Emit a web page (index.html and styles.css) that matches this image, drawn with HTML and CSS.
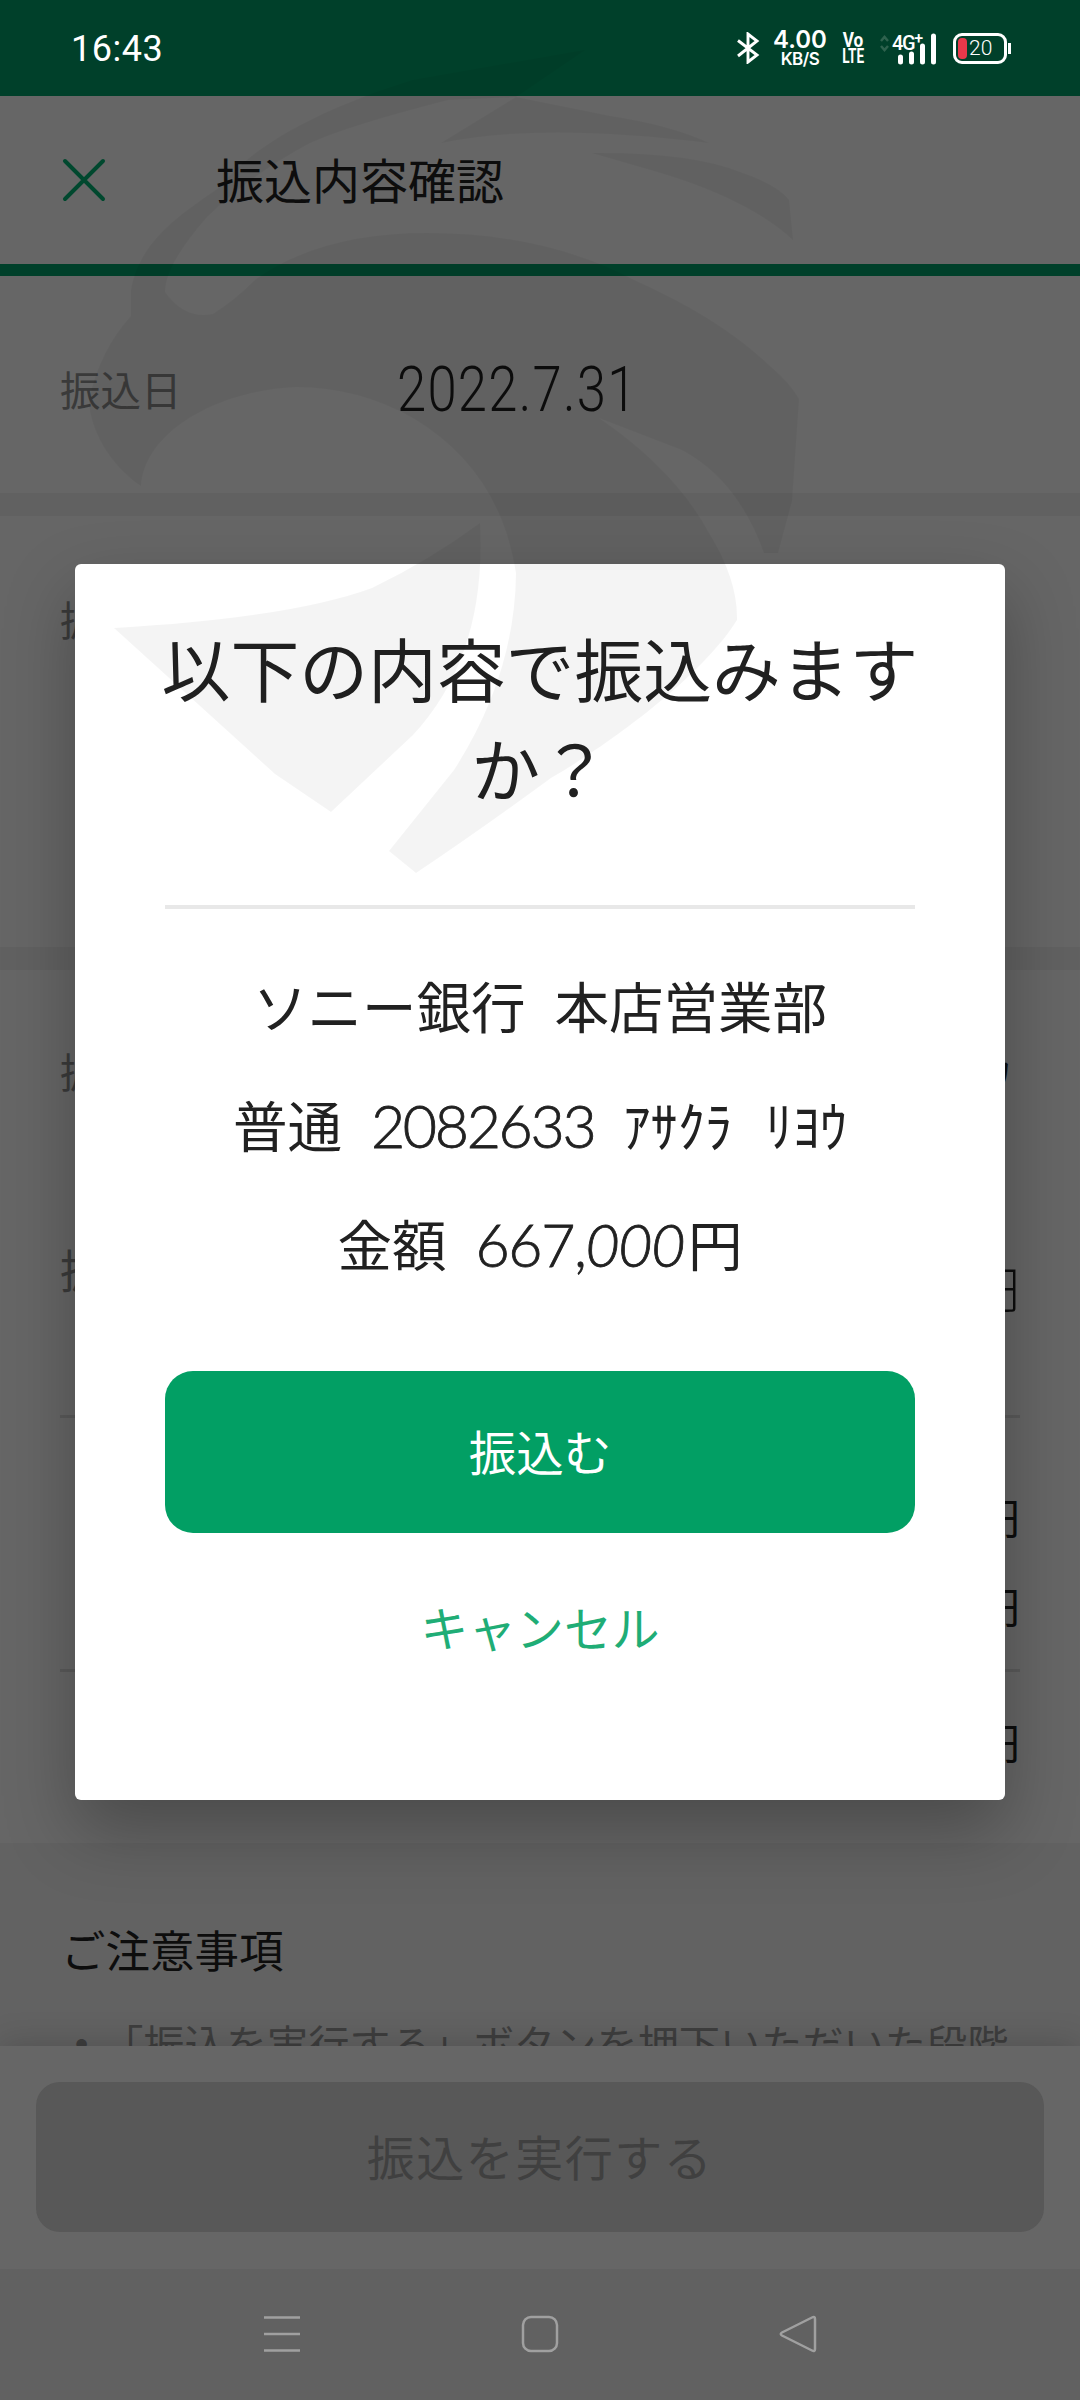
FILE: index.html
```html
<!DOCTYPE html>
<html lang="ja">
<head>
<meta charset="utf-8">
<title>振込内容確認</title>
<link rel="stylesheet" href="styles.css">
</head>
<body>
<div class="screen">
  <header class="status">
    <span class="clock">16:43</span>
    <svg class="bluetooth" width="24" height="32" viewBox="0 0 24 32"><path d="M2 8.500L21 23L12 30V2L21 9L2 24" fill="none" stroke="#fff" stroke-width="2.900"/></svg>
    <div class="speed"><span>4.00</span><small>KB/S</small></div>
    <div class="volte"><span>Vo</span><span>LTE</span></div>
    <div class="signal">
      <svg width="58" height="36" viewBox="0 0 58 36"><path d="M1 11l3.500-4l3.500 4M1 16l3.500 4l3.500-4" fill="none" stroke="#2e624e" stroke-width="2.500"/><path d="M20.500 27v5M31.500 24v8M42.500 16v16M53.500 6v26" stroke="#fff" stroke-width="5" stroke-linecap="round"/></svg>
      <span class="net">4G<sup>+</sup></span>
    </div>
    <div class="battery"><i></i><span>20</span></div>
  </header>
  <div class="appbar">
    <svg width="46" height="46" viewBox="0 0 46 46"><path d="M4 4L42 42M42 4L4 42" stroke="#00482e" stroke-width="4" stroke-linecap="round"/></svg>
    <h1>振込内容確認</h1>
  </div>
  <main class="content">
    <section class="date-row"><span class="label">振込日</span><span class="date">2022.7.31</span></section>
    <section class="source"><span class="label">振込元</span></section>
    <section class="detail">
      <div class="row payee"><span class="label">振込先</span><span class="name">ｱｻｸﾗ ﾘﾖｳ</span></div>
      <div class="row amount"><span class="label big">振込金額</span><span class="yen big-yen">円</span></div>
      <div class="fees"><span class="yen">円</span><span class="yen">円</span></div>
      <div class="total"><span class="yen">円</span></div>
    </section>
    <section class="notes">
      <h2>ご注意事項</h2>
      <p><b>・</b>「振込を実行する」ボタンを押下いただいた段階</p>
    </section>
  </main>
  <footer class="action"><button>振込を実行する</button></footer>
  <nav class="nav">
    <svg width="40" height="40" viewBox="0 0 40 40"><path d="M2 3.500H38M2 20H38M2 36.500H38"/></svg>
    <svg width="40" height="40" viewBox="0 0 40 40"><rect x="3" y="3" width="34" height="34" rx="8"/></svg>
    <svg width="40" height="40" viewBox="0 0 40 40"><path d="M34 3.500Q37 2 37 5V35Q37 38 34 36.500L4 21.500Q1.500 20 4 18.500Z"/></svg>
  </nav>

  <div class="dialog">
    <h2>以下の内容で振込みますか？</h2>
    <div class="info">
      <p>ソニー銀行<s></s>本店営業部</p>
      <p>普通<s></s><span class="num">2082633</span><s></s>ｱｻｸﾗ<s class="wide"></s>ﾘﾖｳ</p>
      <p>金額<s></s><span class="num sum">667,<em>000</em></span>円</p>
    </div>
    <button class="primary">振込む</button>
    <button class="cancel">キャンセル</button>
  </div>

  <svg class="mark" width="1080" height="900" viewBox="0 0 1080 900">
    <path d="M131 290C140 240 180 215 220 187C245 155 300 115 413 80L585 50L516 97L441 143Q540 122 709 143Q670 125 610 116L516 97L448 100Q350 125 310 143Q250 175 207 217Q165 265 165 292Q185 320 213 314Q235 300 255 280Q320 233 427 233Q545 233 634 280Q720 318 771 367Q790 383 799 399L792 501L778 553H764Q738 480 682 450L599 418Q675 470 709 533Q738 580 737 620C700 680 600 750 551 778Q480 830 416 873L389 851L454 770Q515 675 516 573Q500 470 413 418Q358 387 296 387C220 390 145 430 141 486C110 465 90 430 89 400Q100 350 131 316Z"/>
    <path d="M592 153Q690 152 740 172Q778 185 789 200L793 240Q750 200 661 173Z"/>
    <path d="M480 523Q487 655 413 735L331 812L275 774L114 628Q290 618 372 588Q430 560 480 523Z"/>
  </svg>
</div>
</body>
</html>
```
FILE: styles.css
```css
* { box-sizing: border-box; }
body { margin: 0; }
h1, h2, p { margin: 0; font-weight: 400; }
s, i { display: block; text-decoration: none; }
button { border: 0; padding: 0; font: inherit; background: none; }

.screen {
  position: relative;
  display: flex;
  flex-direction: column;
  width: 1080px;
  height: 2400px;
  overflow: hidden;
  background: #666;
  color: #0d0d0d;
  font-family: "Noto Sans CJK JP", sans-serif;
  text-spacing-trim: space-all;
}

/* status bar */
.status {
  display: flex;
  align-items: center;
  height: 96px;
  padding: 0 68px 0 71px;
  background: #00402a;
  color: #fff;
  font-family: Inter, sans-serif;
}
.clock { font: 36px/1 Roboto, sans-serif; letter-spacing: .5px; margin: 2px auto 0 0; }
.bluetooth { margin-right: 13px; }
.speed, .volte { display: flex; flex-direction: column; align-items: center; font-weight: 600; }
.speed { width: 54px; margin-right: 14px; }
.speed span { font-size: 24px; line-height: 22px; }
.speed small { font-size: 17px; line-height: 17px; letter-spacing: -.5px; }
.volte { width: 24px; margin-right: 15px; font: 700 20px/16px Roboto, sans-serif; }
.volte span { transform: scaleX(.68); }
.volte span:first-child { transform: scaleX(.86); }
.signal { position: relative; width: 58px; height: 36px; margin-right: 15px; }
.net { position: absolute; left: 12px; top: 3px; font: 500 20px/20px Roboto, sans-serif; letter-spacing: -1.4px; }
.net sup { font-size: 16px; line-height: 0; vertical-align: 6px; }
.battery {
  position: relative;
  display: flex;
  align-items: center;
  gap: 2px;
  width: 54px;
  height: 31px;
  margin-right: 5px;
  padding-left: 2px;
  border: 3px solid #fff;
  border-radius: 9px;
  font: 300 21px/1 Roboto, sans-serif;
}
.battery i { width: 9px; height: 21px; border-radius: 4px; background: #e8384a; }
.battery::after { content: ""; position: absolute; right: -7px; top: 7px; width: 3px; height: 11px; background: #fff; }

/* app bar */
.appbar {
  display: flex;
  align-items: center;
  gap: 109px;
  height: 180px;
  padding-left: 61px;
  border-bottom: 12px solid #00402a;
}
.appbar h1 { margin-top: -4px; font-size: 48px; line-height: 72px; }

/* page content */
.content { height: 1770px; overflow: hidden; }
.label { color: #3a3a3a; font-size: 40.500px; line-height: 60px; }
.date-row {
  display: flex;
  align-items: center;
  height: 240px;
  padding: 8px 0 0 60px;
  border-bottom: 23px solid #616161;
}
.date {
  margin: 2px 0 0 215px;
  font: 300 63px/72px Roboto, sans-serif;
  letter-spacing: 1.500px;
  transform: scaleX(.835);
  transform-origin: left;
}
.source { height: 454px; padding: 73px 60px 0; border-bottom: 23px solid #616161; }
.detail { height: 873px; padding: 0 60px; }
.row { display: flex; justify-content: space-between; }
.payee { height: 224px; padding-top: 71px; }
.name { font-size: 42px; line-height: 60px; margin-right: 10px; }
.amount { height: 224px; padding-top: 42px; border-bottom: 3px solid #5a5a5a; }
.big { font-size: 46px; line-height: 64px; }
.yen { font-size: 42px; line-height: 60px; }
.big-yen { font-size: 50px; line-height: 100px; font-weight: 300; }
.fees { display: flex; flex-direction: column; align-items: flex-end; gap: 29px; height: 254px; padding-top: 68px; border-bottom: 3px solid #5a5a5a; }
.total { text-align: right; padding-top: 39px; }
.notes { height: 210px; padding: 73px 61px 0; background: #626262; }
.notes h2 { font-size: 44.500px; line-height: 66px; }
.notes p { margin-top: 30px; font-size: 41.200px; line-height: 60px; color: #3e3e3e; white-space: nowrap; }
.notes b { font-weight: 700; }

/* bottom action */
.action {
  height: 223px;
  padding: 36px;
  background: #666;
  box-shadow: 0 -4px 30px rgba(0, 0, 0, .16);
}
.action button {
  width: 1008px;
  height: 150px;
  padding-bottom: 4px;
  border-radius: 24px;
  background: #585858;
  color: #404040;
  font-size: 48px;
  letter-spacing: 1.500px;
}
.nav {
  position: relative;
  display: flex;
  justify-content: center;
  gap: 218px;
  height: 131px;
  padding-top: 45px;
  background: #616161;
}
.nav svg { fill: none; stroke: #a0a0a0; stroke-width: 2.5; }

/* confirmation dialog */
.dialog {
  position: absolute;
  left: 75px;
  top: 564px;
  display: flex;
  flex-direction: column;
  width: 930px;
  height: 1236px;
  padding: 53px 90px 0;
  border-radius: 6px;
  background: #fff;
  color: #212121;
  box-shadow: 0 30px 70px rgba(0, 0, 0, .28);
}
.dialog h2 {
  height: 288px;
  margin: 0 -8px;
  font-size: 68.800px;
  line-height: 100px;
  text-align: center;
  word-break: break-all;
}
.info { height: 466px; padding-top: 36px; border-top: 4px solid #e8e8e8; }
.info p {
  display: flex;
  justify-content: center;
  align-items: center;
  height: 119px;
  font-size: 54.500px;
  line-height: 119px;
  white-space: nowrap;
}
.info s { width: 29px; }
.info .wide { width: 33px; }
.num { padding-top: 4px; font-family: Lato, sans-serif; font-size: 59px; font-weight: 300; letter-spacing: -2.300px; -webkit-text-stroke: .8px #212121; }
.sum { letter-spacing: -1.400px; padding-right: 4px; }
.num em { font-style: italic; }
.primary {
  width: 750px;
  height: 162px;
  padding-bottom: 3px;
  border-radius: 28px;
  background: #029f64;
  color: #fff;
  font-size: 47.500px;
}
.cancel { margin-top: 58px; height: 72px; color: #1fad76; font-size: 47.800px; line-height: 72px; }

/* faint emblem lying over the whole screen */
.mark { position: absolute; left: 0; top: 0; fill: #000; fill-opacity: .043; pointer-events: none; }
```
